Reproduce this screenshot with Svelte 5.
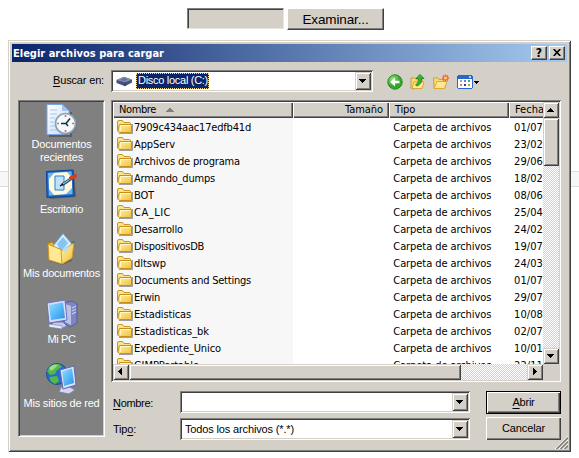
<script>
  // Spreads the letters of a label so that it spans its nominal width.
  function fit(node, width) {
    const natural = node.getBoundingClientRect().width;
    const count = node.textContent.length;
    node.style.letterSpacing = (width - natural) / count + 'px';
  }

  const rows = [
    ['7909c434aac17edfb41d', 117, '01/07'],
    ['AppServ', 41, '23/02'],
    ['Archivos de programa', 106, '29/06'],
    ['Armando_dumps', 81, '18/02'],
    ['BOT', 20, '08/06'],
    ['CA_LIC', 37, '25/04'],
    ['Desarrollo', 49, '24/02'],
    ['DispositivosDB', 70, '19/07'],
    ['dltswp', 32, '24/03'],
    ['Documents and Settings', 117, '01/07'],
    ['Erwin', 26, '29/07'],
    ['Estadisticas', 57, '10/08'],
    ['Estadisticas_bk', 75, '02/07'],
    ['Expediente_Unico', 87, '10/01'],
    ['GIMPPortable', 65, '22/11']
  ];
</script>

{#snippet arrow(dir)}
  <span class="sbtn">
    <svg width="8" height="8" viewBox="0 0 8 8" shape-rendering="crispEdges">
      {#if dir === 'down'}<path d="M0 2H7V3H6V4H5V5H4V6H3V5H2V4H1V3H0Z" />
      {:else if dir === 'up'}<path d="M3 2H4V3H5V4H6V5H7V6H0V5H1V4H2V3H3Z" />
      {:else if dir === 'left'}<path d="M5 0V7H4V6H3V5H2V4H1V3H2V2H3V1H4V0Z" />
      {:else}<path d="M2 0V7H3V6H4V5H5V4H6V3H5V2H4V1H3V0Z" />{/if}
    </svg>
  </span>
{/snippet}

{#snippet folder()}
  <svg class="folder" width="16" height="16" viewBox="0 0 16 16">
    <path d="M2 14.5H15.5V5" fill="none" stroke="#777" stroke-opacity=".7" />
    <path d="M.5 3Q.5 1.5 2 1.5H5.5L7 3.5H12.5Q13.5 3.5 13.5 5V12H.5Z" fill="#fbe38a" stroke="#c69528" />
    <path d="M2.5 5.5H14.5V13.5H2.5L.7 12Z" fill="url(#fold)" stroke="#c6901b" />
    <path d="M3.5 12V6.5H13.5" fill="none" stroke="#fff8cc" />
  </svg>
{/snippet}

<div class="page">
  <div class="upload">
    <div class="file"></div>
    <div class="browse"><span use:fit={66}>Examinar...</span></div>
  </div>

  <div class="dialog">
    <div class="title">
      <b><span use:fit={151}>Elegir archivos para cargar</span></b>
      <span class="cap">?</span>
      <span class="cap x"><svg width="8" height="7" viewBox="0 0 8 7"><path d="M.7 0L7.3 7M7.3 0L.7 7" stroke="#000" stroke-width="1.6" /></svg></span>
    </div>

    <div class="look">
      <div class="looklabel"><span use:fit={51}><u>B</u>uscar en:</span></div>
      <div class="combo drive">
        <svg class="disk" width="17" height="11" viewBox="0 0 17 11">
          <path d="M.5 4L8 .8L16 3.5V6.5L9 10.3L.5 7Z" fill="#46527d" />
          <path d="M.5 4L8 .8L16 3.5L9 6.3Z" fill="#8794b4" />
          <path d="M4 4L8 2L12 3.5L9 5Z" fill="#63709a" />
          <path d="M9 6.5V10" stroke="#303b68" />
        </svg>
        <span class="sel"><span use:fit={70}>Disco local (C:)</span></span>
        {@render arrow('down')}
      </div>
      <div class="tools">
        <svg width="16" height="16" viewBox="0 0 16 16">
          <circle cx="8" cy="8" r="7.2" fill="url(#green)" stroke="#258c22" />
          <path d="M3 8L8 3.5V6.7H12.5V9.3H8V12.5Z" fill="#fff" />
        </svg>
        <svg width="16" height="16" viewBox="0 0 16 16">
          <path d="M1 4H5L6 5H12V13L3 15L1 14Z" fill="#f8d873" stroke="#c99b30" />
          <path d="M4 8H14L12 14.5H2Z" fill="#ffe98f" stroke="#d9a935" />
          <path d="M5.5 11Q9 9 8.5 4.5H6L10 .5L14 4.5H11.5Q12 10 7 12Z" fill="#39b52f" stroke="#177b18" stroke-width=".8" />
        </svg>
        <svg width="16" height="16" viewBox="0 0 16 16">
          <path d="M.5 4H5L6 5.5H12V14H1Z" fill="#f8d873" stroke="#d2a03b" />
          <path d="M4 7.5H14L11.5 14.5H1Z" fill="#ffe98f" stroke="#dda73c" />
          <path d="M12.5 .5V7.5M9 4H16M10 1.5L15 6.5M15 1.5L10 6.5" stroke="#ef6030" stroke-width="1.4" />
          <circle cx="12.5" cy="4" r="1.5" fill="#ffd36d" />
        </svg>
        <svg class="views" width="24" height="16" viewBox="0 0 24 16" shape-rendering="crispEdges">
          <path d="M1 1H15V2H16V14H15V15H1V14H0V2H1Z" fill="#2868cc" />
          <path d="M1 5H15V14H1Z" fill="#fff" />
          <path d="M12 2H14V4H12Z" fill="#b9d5ff" />
          <path d="M3 6H5V8H3Z" fill="#9ba4be" /><path d="M7 6H9V8H7Z" fill="#777ec0" /><path d="M11 6H13V8H11Z" fill="#43a654" />
          <path d="M3 10H5V12H3Z" fill="#ee795b" /><path d="M7 10H9V12H7Z" fill="#2142a5" /><path d="M11 10H13V12H11Z" fill="#c59b38" />
          <path d="M17 7H22V8H21V9H20V10H19V9H18V8H17Z" />
        </svg>
      </div>
    </div>

    <div class="body">
      <div class="places">
        <div class="place">
          <svg width="34" height="34" viewBox="0 0 34 34">
            <path d="M4 33H26V9" fill="none" stroke="#333" stroke-opacity=".45" stroke-width="2" />
            <path d="M2 1.5H17L24 8V31.5H2Z" fill="url(#paper)" stroke="#7da4e7" />
            <path d="M17 1.5V8H24Z" fill="#9ec2f5" />
            <path d="M5 7H12M5 11H12M5 15H10M5 19H9M5 23H10M5 27H14" stroke="#a7c5f2" />
            <circle cx="21.5" cy="21.5" r="10.5" fill="#505965" opacity=".5" />
            <circle cx="20.5" cy="20.5" r="10" fill="#f2f8fb" stroke="#8ca3b3" stroke-width="1.7" />
            <path d="M20.5 12V14M20.5 27V29M12 20.5H14M27 20.5H29" stroke="#ef6843" stroke-width="1.6" />
            <path d="M16 20.5H21L25 15.5M21 20.5L23 23" fill="none" stroke="#152d43" stroke-width="1.5" />
          </svg>
          <span use:fit={60}>Documentos</span><span use:fit={43}>recientes</span>
        </div>
        <div class="place p2">
          <svg width="34" height="32" viewBox="0 0 34 32">
            <path d="M4 5L29 3L31 29L5 31Z" fill="#303030" opacity=".4" />
            <path d="M1.5 3.5L28 2L29 28L2 29.5Z" fill="#246bc3" stroke="#07409a" />
            <path d="M3 5L26.5 3.5L27.5 26L4 27.5Z" fill="#6ab6ed" />
            <path d="M9 5L22 4L27 10V20L21 26L9 27L4 21V11Z" fill="#fff9dd" />
            <path d="M10 8H19V22H10Z" fill="#c0e1fb" stroke="#2682d1" />
            <path d="M17 17L27 10" stroke="#285579" stroke-width="3" /><path d="M18 16L26 10.5" stroke="#a9d7ed" />
            <path d="M26 10L30 8" stroke="#d63c1e" stroke-width="4" stroke-linecap="round" /><path d="M15 18L18 16" stroke="#111" stroke-width="1.5" />
          </svg>
          <span use:fit={43}>Escritorio</span>
        </div>
        <div class="place p3">
          <svg width="34" height="34" viewBox="0 0 34 34">
            <path d="M6 15L30 9L27 29L17 33L4 29Z" fill="#333" opacity=".35" />
            <path d="M3 11L7 10L10 13L24 16V28H5Z" fill="#e9b538" stroke="#b27a13" />
            <path d="M8 14L18 1.5L27 12L18 25Z" fill="#d7effd" stroke="#5da2db" />
            <path d="M12 12L18 5L23 11L16 20Z" fill="#86c4f5" />
            <path d="M3 12L17 18V32L4 28Z" fill="#ffe992" stroke="#cc9326" />
            <path d="M16 19L29 11L27 26L17 32Z" fill="url(#fold)" stroke="#d89f29" />
            <path d="M17 17L25 14L20 21Z" fill="#b3ddf8" />
          </svg>
          <span use:fit={77}>Mis documentos</span>
        </div>
        <div class="place p4">
          <svg width="34" height="34" viewBox="0 0 34 34">
            <path d="M19 5L27 3L32 6V25L25 29L19 25Z" fill="#7d86c2" stroke="#555f9e" />
            <path d="M20 6L26 8V27L20 24Z" fill="#bbc1e8" /><path d="M27 10L31 8M27 13L31 11M27 16L31 14" stroke="#d9def7" />
            <path d="M8 24H18L22 28L16 31L6 28Z" fill="#c3c8e8" stroke="#6c75b2" />
            <path d="M2 5L20 2L22 22L4 25Z" fill="#d9ddf5" stroke="#6872b9" />
            <path d="M4 7L18 4.5L20 20L6 22Z" fill="url(#screen)" />
            <path d="M4 26L17 28V31L4 29Z" fill="#ecedf7" stroke="#777fae" stroke-width=".6" />
          </svg>
          <span use:fit={28}>Mi PC</span>
        </div>
        <div class="place p5">
          <svg width="34" height="34" viewBox="0 0 34 34">
            <circle cx="12" cy="12" r="10.5" fill="#286dcc" stroke="#174e9b" />
            <path d="M2 9Q6 1 14 2L17 5L12 8L10 12L5 13ZM5 15L12 14L14 19L10 22Q4 20 5 15Z" fill="#54b947" />
            <path d="M4 6Q8 1 13 3L9 7L6 9Z" fill="#a0dd83" />
            <path d="M16 25H25L30 28L24 32L14 30Z" fill="#d3d6ed" stroke="#7a80ae" />
            <path d="M15 8L29 4L31 23L18 27Z" fill="#dee2f7" stroke="#5b69b4" />
            <path d="M17 9.5L27 6.5L29 21L19 24Z" fill="url(#screen)" />
          </svg>
          <span use:fit={76}>Mis sitios de red</span>
        </div>
      </div>

      <div class="main">
        <div class="list">
          <div class="upper">
            <div class="table">
              <div class="head">
                <div class="h name"><span use:fit={37}>Nombre</span><svg width="8" height="4" viewBox="0 0 8 4" shape-rendering="crispEdges"><path d="M3 0H5V1H6V2H7V3H8V4H0V3H1V2H2V1H3Z" fill="#808080" /></svg></div>
                <div class="h size"><span use:fit={38}>Tamaño</span></div>
                <div class="h type"><span use:fit={20}>Tipo</span></div>
                <div class="h date"><span use:fit={29}>Fecha</span></div>
              </div>
              <div class="rows">
                {#each rows as [name, width, date]}
                  <div class="row">
                    <div class="c1">{@render folder()}<span use:fit={width}>{name}</span></div>
                    <div class="c3"><span use:fit={98}>Carpeta de archivos</span></div>
                    <div class="c4"><span use:fit={29}>{date}</span></div>
                  </div>
                {/each}
              </div>
            </div>
            <div class="vbar">{@render arrow('up')}<i class="vthumb"></i><i class="gap"></i>{@render arrow('down')}</div>
          </div>
          <div class="hbar">
            <div class="track">{@render arrow('left')}<i class="hthumb"></i><i class="gap"></i>{@render arrow('right')}</div>
          </div>
        </div>

        <div class="fields">
          <div class="labels">
            <div><span use:fit={40}><u>N</u>ombre:</span></div>
            <div><span use:fit={23}>Tip<u>o</u>:</span></div>
          </div>
          <div class="inputs">
            <div class="combo">{@render arrow('down')}</div>
            <div class="combo"><span class="value"><span use:fit={109}>Todos los archivos (*.*)</span></span>{@render arrow('down')}</div>
          </div>
          <div class="buttons">
            <div class="btn default"><span use:fit={22}><u>A</u>brir</span></div>
            <div class="btn"><span use:fit={43}>Cancelar</span></div>
          </div>
        </div>
      </div>
    </div>
    <svg class="grip" width="13" height="13" viewBox="0 0 13 13">
      <path d="M0 13L13 0M4 13L13 4M8 13L13 8" stroke="#fff" />
      <path d="M1.5 13L13 1.5M5.5 13L13 5.5M9.5 13L13 9.5" stroke="#808080" stroke-width="1.6" />
    </svg>
  </div>

  <svg class="defs" width="0" height="0">
    <defs>
      <linearGradient id="fold" x1="0" y1="0" x2="1" y2="1"><stop offset="0" stop-color="#fff3a6" /><stop offset="1" stop-color="#f2bf3d" /></linearGradient>
      <linearGradient id="paper" x1="0" y1="0" x2="1" y2="1"><stop offset="0" stop-color="#fff" /><stop offset="1" stop-color="#c3dafa" /></linearGradient>
      <linearGradient id="screen" x1="0" y1="0" x2="1" y2="1"><stop offset="0" stop-color="#8fe0ff" /><stop offset="1" stop-color="#2691ee" /></linearGradient>
      <radialGradient id="green" cx=".35" cy=".3"><stop offset="0" stop-color="#9be27c" /><stop offset="1" stop-color="#32a52b" /></radialGradient>
    </defs>
  </svg>
</div>

<style>
  :global(body) { overflow: hidden; }
  .page {
    box-sizing: border-box; width: 579px; height: 458px; padding: 8px 8px 0;
    font: 11px/13px "Liberation Sans", Arial, sans-serif; color: #000; white-space: nowrap;
    background: linear-gradient(#fff 171px, #ddd 171px, #ddd 172px, #f7f7f7 172px, #f7f7f7 186px, #ddd 186px, #ddd 187px, #fff 187px);
  }
  .page div, .page .sbtn, .page i { box-sizing: border-box; }
  span { display: inline-block; }
  svg { display: block; flex: none; }
  u { text-decoration: underline; text-underline-offset: 2px; text-decoration-thickness: 1px; }
  .upload { display: flex; gap: 3px; height: 32px; padding-left: 179px; }
  .file { width: 97px; height: 21px; background: #d4d0c8; border: 1px solid; border-color: #808080 #e8e6e1 #e8e6e1 #808080; box-shadow: inset 1px 1px #404040; }
  .browse { width: 97px; height: 22px; background: #d4d0c8; border: 1px solid; border-color: #fff #404040 #404040 #fff; box-shadow: inset -1px -1px #808080; font-size: 13.5px; line-height: 21px; text-align: center; }
  .dialog { position: relative; width: 563px; height: 412px; padding: 4px; background: #d4d0c8; box-shadow: inset 1px 1px #d4d0c8, inset -1px -1px #404040, inset 2px 2px #fff, inset -2px -2px #808080; }
  .title { display: flex; align-items: center; height: 18px; width: 555px; padding: 0 2px 0 1px; background: linear-gradient(90deg, #0a246a, #a6caf0); color: #fff; }
  .title b { flex: 1; font: bold 11px/17px "DejaVu Sans Condensed", sans-serif; }
  .cap { width: 16px; height: 14px; box-sizing: border-box; background: #d4d0c8; color: #000; border: 1px solid; border-color: #fff #404040 #404040 #fff; box-shadow: inset -1px -1px #808080; font: bold 12px/12px "DejaVu Sans Condensed", sans-serif; text-align: center; }
  .cap.x { margin-left: 2px; padding: 2px 0 0 3px; }
  .look { display: flex; height: 38px; padding-top: 8px; }
  .looklabel { width: 99px; padding: 4px 0 0 41px; }
  .combo { display: flex; height: 22px; padding: 2px; background: #fff; border: 0; box-shadow: inset 1px 1px #808080, inset -1px -1px #fff, inset 2px 2px #404040, inset -2px -2px #d4d0c8; }
  .combo > :global(.sbtn) { margin-left: auto; height: 100%; }
  .drive { width: 262px; }
  .disk { margin: 4px 0 0 3px; }
  .sel { box-sizing: border-box; width: 73px; height: 16px; margin: 1px 0 0 3px; padding-left: 1px; background: #0a246a; color: #fff; border: 1px dotted #f5db95; line-height: 13px; overflow: hidden; }
  .sbtn { display: flex; align-items: center; justify-content: center; flex: none; width: 16px; height: 16px; background: #d4d0c8; box-shadow: inset 1px 1px #d4d0c8, inset -1px -1px #404040, inset 2px 2px #fff, inset -2px -2px #808080; }
  .tools { display: flex; gap: 7px; padding: 4px 0 0 14px; }
  .views { margin-left: 1px; }
  .body { display: flex; gap: 6px; padding-left: 6px; }
  .places { width: 87px; height: 337px; background: #808080; border: 1px solid; border-color: #808080 #fff #fff #808080; box-shadow: inset 1px 1px #404040, inset -1px -1px #d4d0c8; color: #fff; padding-top: 2px; }
  .place { display: flex; flex-direction: column; align-items: center; height: 64px; }
  .place svg { margin-bottom: 1px; }
  .p2 { height: 65px; }
  .p2 svg { margin: 1px 0 3px; }
  .p3 { height: 66px; } .p4 { height: 64px; }
  .main { width: 450px; }
  .list { height: 282px; padding: 2px 2px 1px; background: #d4d0c8; box-shadow: inset 1px 1px #808080, inset -1px -1px #fff, inset 2px 2px #404040, inset -2px -2px #d4d0c8; font-family: "DejaVu Sans Condensed", sans-serif; }
  .upper { display: flex; height: 262px; }
  .table { width: 430px; overflow: hidden; background: linear-gradient(90deg, #f7f7f7 180px, #fff 180px); }
  .head { display: flex; height: 16px; }
  .h { flex: none; height: 16px; padding: 2px 6px 0; line-height: 12px; background: #d4d0c8; box-shadow: inset 1px 1px #fff, inset -1px -1px #404040, inset -2px -2px #808080; }
  .h.name { display: flex; width: 180px; } .name svg { margin: 4px 0 0 10px; }
  .size { width: 96px; text-align: right; } .type { width: 120px; } .date { width: 60px; }
  .rows { padding-top: 1px; }
  .row { display: flex; height: 17px; line-height: 17px; }
  .c1 { display: flex; width: 281px; padding-left: 4px; gap: 1px; }
  .c3 { width: 121px; }
  .vbar { display: flex; flex-direction: column; width: 16px; background: repeating-conic-gradient(#fff 0 25%, #d4d0c8 0 50%) 0 0/2px 2px; }
  .gap { flex: 1; }
  .vthumb, .hthumb { background: #d4d0c8; box-shadow: inset 1px 1px #d4d0c8, inset -1px -1px #404040, inset 2px 2px #fff, inset -2px -2px #808080; }
  .vthumb { height: 48px; } .hthumb { width: 332px; }
  .hbar { height: 16px; background: #d4d0c8; }
  .track { display: flex; width: 430px; height: 16px; background: repeating-conic-gradient(#fff 0 25%, #d4d0c8 0 50%) 0 0/2px 2px; }
  .fields { display: flex; padding-top: 9px; }
  .labels { display: flex; flex-direction: column; gap: 13px; width: 69px; padding: 6px 0 0 2px; }
  .labels div { height: 13px; }
  .inputs { display: flex; flex-direction: column; gap: 5px; width: 290px; }
  .value { padding: 3px 0 0 3px; }
  .buttons { display: flex; flex-direction: column; gap: 3px; margin-left: 16px; }
  .btn { width: 75px; height: 23px; line-height: 22px; text-align: center; box-shadow: inset 1px 1px #fff, inset -1px -1px #404040, inset -2px -2px #808080; }
  .default { border: 1px solid #000; line-height: 20px; }
  .grip { position: absolute; right: 3px; bottom: 3px; }
  .defs { position: absolute; }
</style>
